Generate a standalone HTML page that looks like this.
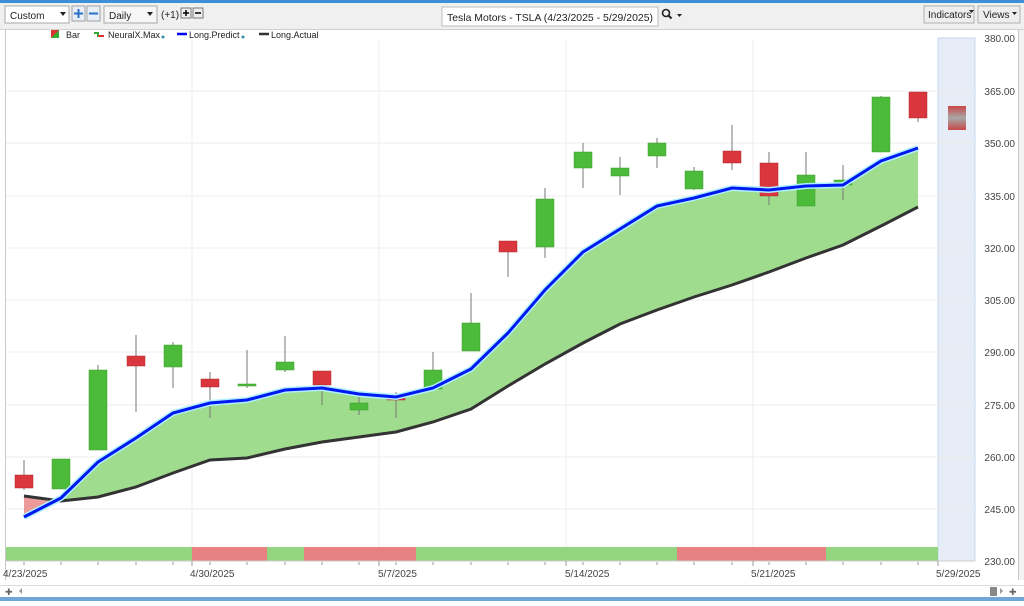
<!DOCTYPE html>
<html><head><meta charset="utf-8"><style>
body{margin:0;width:1024px;height:601px;overflow:hidden;background:#fff;font-family:"Liberation Sans",sans-serif;}
</style></head><body>
<svg width="1024" height="601" xmlns="http://www.w3.org/2000/svg" font-family="Liberation Sans, sans-serif">
<rect width="1024" height="601" fill="#fff"/>
<rect x="0" y="0" width="1024" height="30" fill="#f0f0f0"/>
<rect x="0" y="0" width="1024" height="3" fill="#3d8fd6"/>
<rect x="0" y="29" width="1024" height="1" fill="#d0d0d0"/>
<rect x="5" y="6" width="64" height="17" fill="#fff" stroke="#a8a8a8"/>
<text x="10" y="19" font-size="10" fill="#222">Custom</text>
<path d="M60 12h6l-3 4z" fill="#222"/>
<rect x="72" y="6" width="13" height="15" fill="#e8eef6" stroke="#a0a0a0"/>
<path d="M74 13.5h9M78.5 9v9" stroke="#2a6fc9" stroke-width="2"/>
<rect x="87" y="6" width="13" height="15" fill="#e8eef6" stroke="#a0a0a0"/>
<path d="M89 13.5h9" stroke="#2a6fc9" stroke-width="2"/>
<rect x="104" y="6" width="53" height="17" fill="#f6f6f6" stroke="#a8a8a8"/>
<text x="109" y="19" font-size="10" fill="#222">Daily</text>
<path d="M147 12h6l-3 4z" fill="#222"/>
<text x="161" y="18" font-size="10" fill="#222">(+1)</text>
<rect x="181" y="8" width="10" height="10" fill="#eee" stroke="#777"/>
<path d="M183 13h6M186 10v6" stroke="#000" stroke-width="1.5"/>
<rect x="193" y="8" width="10" height="10" fill="#eee" stroke="#777"/>
<path d="M195 13h6" stroke="#000" stroke-width="1.5"/>
<rect x="442" y="7" width="216" height="19" fill="#fff" stroke="#bbb"/>
<text x="447" y="21" font-size="10.5" fill="#222" textLength="206" lengthAdjust="spacingAndGlyphs">Tesla Motors - TSLA (4/23/2025 - 5/29/2025)</text>
<circle cx="666" cy="13" r="3.5" fill="none" stroke="#222" stroke-width="1.6"/>
<path d="M668.5 15.5l3 3" stroke="#222" stroke-width="2"/>
<path d="M677 14h5l-2.5 3z" fill="#222"/>
<rect x="924" y="6" width="50" height="17" fill="#eee" stroke="#b0b0b0"/>
<text x="928" y="18" font-size="10" fill="#222">Indicators</text>
<path d="M969 10h5l-2.5 3z" fill="#222"/>
<rect x="978" y="6" width="42" height="17" fill="#eee" stroke="#b0b0b0"/>
<text x="983" y="18" font-size="10" fill="#222">Views</text>
<path d="M1012 12h5l-2.5 3z" fill="#222"/>
<rect x="0" y="30" width="6" height="571" fill="#fff"/>
<rect x="5" y="30" width="1" height="550" fill="#c8c8c8"/>
<rect x="1018" y="30" width="6" height="550" fill="#f2f2f2"/>
<rect x="1018" y="30" width="1" height="550" fill="#c8c8c8"/>
<path d="M51 30h8v8h-8z" fill="#d33"/><path d="M51 38l8-8v8z" fill="#3a3"/>
<text x="66" y="38" font-size="9" fill="#222">Bar</text>
<path d="M94 33h4v3h6" stroke="#3a3" stroke-width="2" fill="none"/><path d="M98 36h6" stroke="#d33" stroke-width="2"/>
<text x="108" y="38" font-size="9" fill="#222">NeuralX.Max</text><circle cx="163" cy="37" r="1.5" fill="#3a8fb0"/>
<path d="M177 34h10" stroke="#00f" stroke-width="2.5"/>
<text x="189" y="38" font-size="9" fill="#222">Long.Predict</text><circle cx="243" cy="37" r="1.5" fill="#3a8fb0"/>
<path d="M259 34h10" stroke="#333" stroke-width="2.5"/>
<text x="271" y="38" font-size="9" fill="#222">Long.Actual</text>
<rect x="938" y="38" width="37" height="523" fill="#e6edf6" stroke="#c6d8ec"/>
<g stroke="#ececec" stroke-width="1">
<path d="M6 91h969M6 143h969M6 196h969M6 248h969M6 300h969M6 352h969M6 405h969M6 457h969M6 509h969"/>
<path d="M192 40v521M379 40v521M566 40v521M753 40v521"/>
</g>
<g font-size="10" fill="#444" text-anchor="end">
<text x="1015" y="42">380.00</text><text x="1015" y="95">365.00</text><text x="1015" y="147">350.00</text>
<text x="1015" y="200">335.00</text><text x="1015" y="252">320.00</text><text x="1015" y="304">305.00</text>
<text x="1015" y="356">290.00</text><text x="1015" y="409">275.00</text><text x="1015" y="461">260.00</text>
<text x="1015" y="513">245.00</text><text x="1015" y="565">230.00</text>
</g>
<polygon fill="#9fdc8e" points="52,502 61,498 98,462 136,438 173,413 210,403 247,400 285,390 322,388 359,394 396,397 433,388 471,369 508,333 545,290 583,252 620,229 657,206 694,198 732,188 769,190 806,186 843,185 881,161 918,148 918,207 881,226 843,245 806,258 769,272 732,285 694,297 657,310 620,324 583,343 545,364 508,386 471,409 433,422 396,432 359,437 322,442 285,449 247,458 210,460 173,473 136,487 98,497 61,501"/>
<polygon fill="#ec9a9a" points="24,496 24,517 52,502"/>
<g stroke="#777" stroke-width="1">
<path d="M24 460v30M61 459v30M98 365v85M136 335v77M173 342v46M210 372v46M247 350v38M285 336v36M322 371v34M359 395v20M396 392v26M433 352v37M471 293v58M508 241v36M545 188v70M583 143v45M620 157v38M657 138v30M694 167v23M732 125v45M769 152v53M806 152v54M843 165v35M881 96v56M918 92v30"/>
</g>
<g fill="#d9363e" stroke="#b02a30" stroke-width="0.5">
<rect x="15" y="475" width="18" height="13"/><rect x="127" y="356" width="18" height="10"/>
<rect x="201" y="379" width="18" height="8"/><rect x="313" y="371" width="18" height="14"/>
<rect x="387" y="398" width="18" height="2"/><rect x="499" y="241" width="18" height="11"/>
<rect x="723" y="151" width="18" height="12"/><rect x="760" y="163" width="18" height="33"/>
<rect x="909" y="92" width="18" height="26"/>
</g>
<g fill="#4cbb3a" stroke="#3a9a2c" stroke-width="0.5">
<rect x="52" y="459" width="18" height="30"/><rect x="89" y="370" width="18" height="80"/>
<rect x="164" y="345" width="18" height="22"/><rect x="238" y="384" width="18" height="2"/>
<rect x="276" y="362" width="18" height="8"/><rect x="350" y="403" width="18" height="7"/>
<rect x="424" y="370" width="18" height="19"/><rect x="462" y="323" width="18" height="28"/>
<rect x="536" y="199" width="18" height="48"/><rect x="574" y="152" width="18" height="16"/>
<rect x="611" y="168" width="18" height="8"/><rect x="648" y="143" width="18" height="13"/>
<rect x="685" y="171" width="18" height="18"/><rect x="797" y="175" width="18" height="31"/>
<rect x="834" y="180" width="18" height="5"/><rect x="872" y="97" width="18" height="55"/>
</g>
<defs><linearGradient id="g" x1="0" y1="0" x2="0" y2="1"><stop offset="0" stop-color="#c84848"/><stop offset="0.5" stop-color="#a8a8a8"/><stop offset="1" stop-color="#c84848"/></linearGradient></defs>
<rect x="948" y="106" width="18" height="24" fill="url(#g)"/>
<polyline fill="none" stroke="#333" stroke-width="3" points="24,496 61,501 98,497 136,487 173,473 210,460 247,458 285,449 322,442 359,437 396,432 433,422 471,409 508,386 545,364 583,343 620,324 657,310 694,297 732,285 769,272 806,258 843,245 881,226 918,207"/>
<polyline fill="none" stroke="#aef0ff" stroke-width="6" points="24,517 61,498 98,462 136,438 173,413 210,403 247,400 285,390 322,388 359,394 396,397 433,388 471,369 508,333 545,290 583,252 620,229 657,206 694,198 732,188 769,190 806,186 843,185 881,161 918,148"/>
<polyline fill="none" stroke="#0018f0" stroke-width="3" points="24,517 61,498 98,462 136,438 173,413 210,403 247,400 285,390 322,388 359,394 396,397 433,388 471,369 508,333 545,290 583,252 620,229 657,206 694,198 732,188 769,190 806,186 843,185 881,161 918,148"/>
<rect x="6" y="547" width="186" height="14" fill="#93d67f"/>
<rect x="192" y="547" width="75" height="14" fill="#e88282"/>
<rect x="267" y="547" width="37" height="14" fill="#93d67f"/>
<rect x="304" y="547" width="112" height="14" fill="#e88282"/>
<rect x="416" y="547" width="261" height="14" fill="#93d67f"/>
<rect x="677" y="547" width="149" height="14" fill="#e88282"/>
<rect x="826" y="547" width="112" height="14" fill="#93d67f"/>
<path d="M6 561h969" stroke="#ccc"/>
<g stroke="#999"><path d="M24 562v3M61 562v3M98 562v3M136 562v3M173 562v3M192 561v5M210 562v3M247 562v3M285 562v3M322 562v3M359 562v3M379 561v5M396 562v3M433 562v3M471 562v3M508 562v3M545 562v3M566 561v5M583 562v3M620 562v3M657 562v3M694 562v3M732 562v3M753 561v5M769 562v3M806 562v3M843 562v3M881 562v3M918 562v3M938 561v5"/></g>
<g font-size="10" fill="#444">
<text x="3" y="577">4/23/2025</text><text x="190" y="577">4/30/2025</text><text x="378" y="577">5/7/2025</text>
<text x="565" y="577">5/14/2025</text><text x="751" y="577">5/21/2025</text><text x="936" y="577">5/29/2025</text>
</g>
<rect x="0" y="585" width="1024" height="1" fill="#ddd"/>
<rect x="0" y="597" width="1024" height="4" fill="#6fa7d8"/>
<text x="5" y="595" font-size="9" fill="#666">✚</text>
<path d="M22 588v6l-3-3z" fill="#999"/>
<rect x="990" y="587" width="7" height="9" fill="#888"/>
<path d="M1000 588v6l3-3z" fill="#999"/>
<text x="1009" y="595" font-size="9" fill="#666">✚</text>
</svg>
</body></html>
